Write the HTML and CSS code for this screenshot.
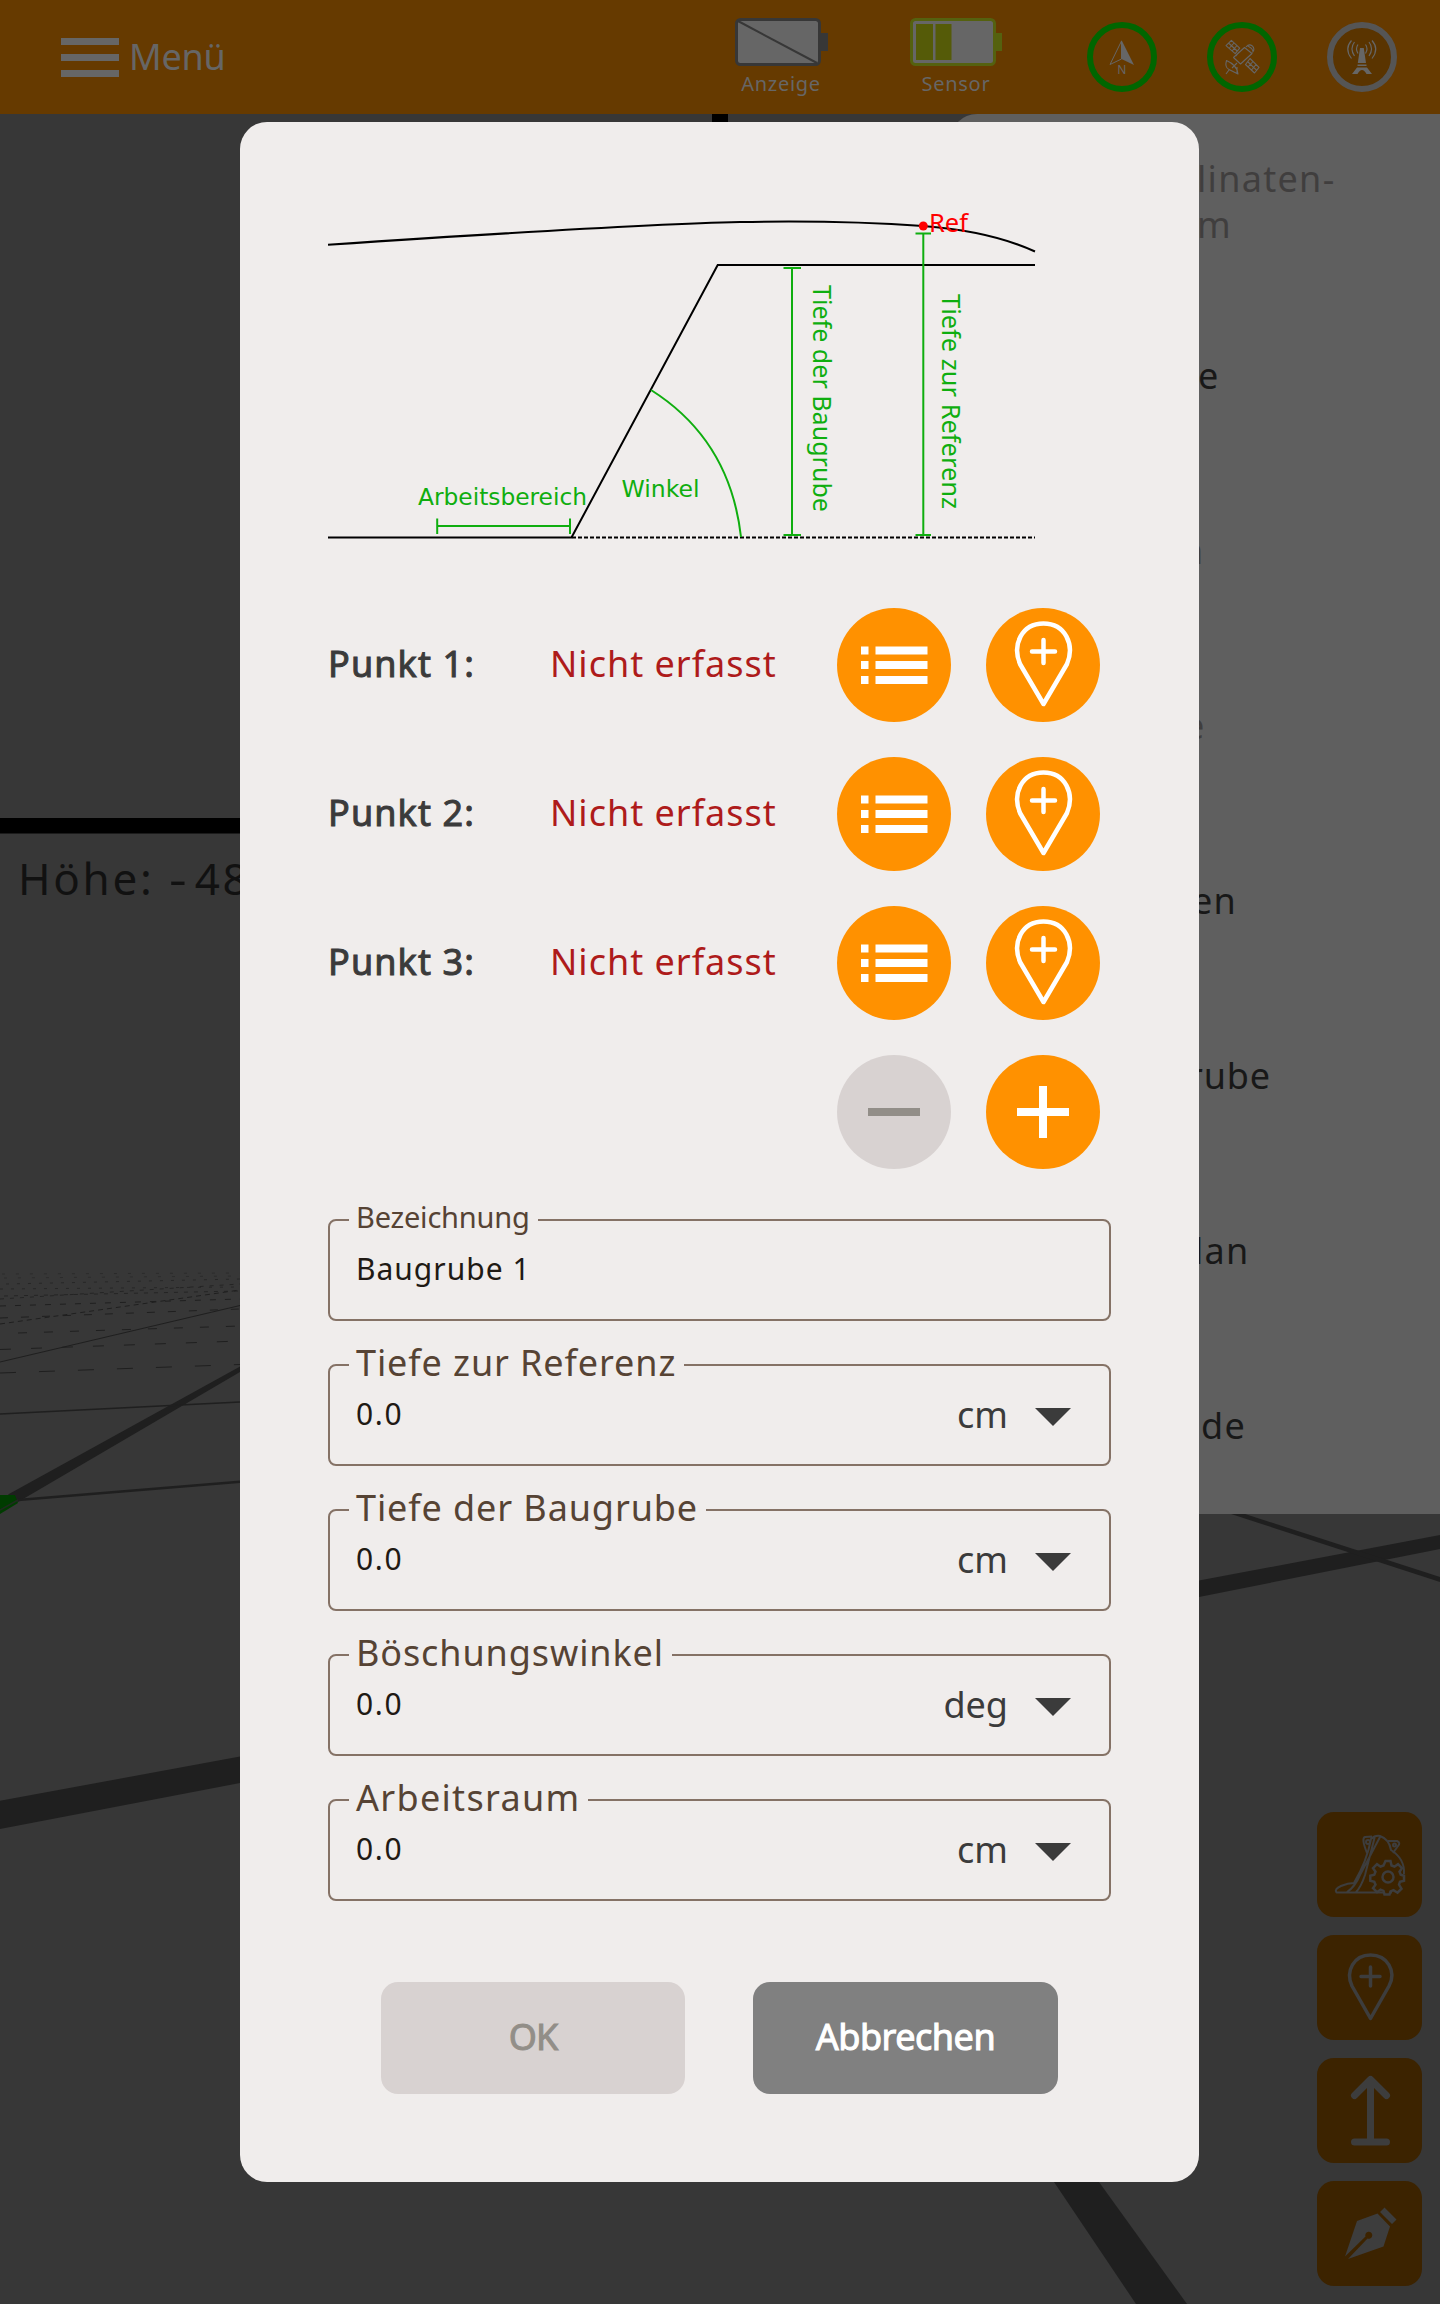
FILE: index.html
```html
<!DOCTYPE html>
<html lang="de">
<head>
<meta charset="utf-8">
<title>Baugrube</title>
<link rel="stylesheet" href="styles.css">
</head>
<body>
<svg class="symbols" width="0" height="0" aria-hidden="true">
  <symbol id="list" viewBox="0 0 114 114">
    <path fill="currentColor" d="M24 38.500h7.500v8h-7.500zM38.500 38.500h52v8h-52zM24 53h7.500v8h-7.500zM38.500 53h52v8h-52zM24 68h7.500v8h-7.500zM38.500 68h52v8h-52z"/>
  </symbol>
  <symbol id="pin" viewBox="0 0 114 114">
    <path fill="none" stroke="currentColor" stroke-width="4.500" stroke-linejoin="round" d="M57.500 96 34 56C26 37 35.500 15.500 57.500 15.500S89 37 81 56Z"/>
    <path stroke="currentColor" stroke-width="4.500" stroke-linecap="round" d="M57.500 32v23M46 43.500h23"/>
  </symbol>
</svg>
<div class="screen">
  <svg class="scene" viewBox="0 0 1440 2304" aria-hidden="true">
    <path fill="#000" d="M0 818h1440v15.500H0zM712 114h16v16h-16z"/>
    <g fill="#1f1f1f">
      <path d="M8 1494.500 240 1366.500v5.500L18 1502z"/>
      <path d="M0 1800.700 240 1756.600V1783L0 1829z"/>
      <path d="M1199 1580.600 1440 1535v14L1199 1597z"/>
      <path d="M1054 2182h45l88 122h-51z"/>
      <path d="M1228 1513h14L1440 1577v5z"/>
    </g>
    <g stroke="#1f1f1f" fill="none">
      <path stroke-width="2.500" d="M18 1500 240 1481.700"/>
      <path stroke-width="1.500" d="M0 1414 240 1402"/>
      <path d="M0 1362 240 1305.500"/>
      <path stroke-dasharray="16 23" d="M0 1373 240 1364.500"/>
      <path stroke-dasharray="11 20" d="M0 1349.500 240 1341"/>
      <path stroke-dasharray="9 17" d="M18 1333 240 1326"/>
      <path stroke-dasharray="5 4" d="M0 1324 240 1290"/>
      <path stroke-dasharray="8 13" d="M0 1318 240 1309"/>
      <path stroke-dasharray="6 9" d="M0 1306 240 1299"/>
      <path stroke-dasharray="4 6" opacity=".8" d="M0 1299 240 1284M4 1296 240 1291"/>
      <path stroke-dasharray="3 8" opacity=".7" d="M0 1289 240 1287M6 1284 240 1279"/>
      <path stroke-dasharray="3 11" opacity=".5" d="M4 1278 240 1276M2 1274 240 1273"/>
    </g>
    <path fill="#003c00" d="M0 1495h15l3 8-18 11z"/>
    <path stroke="#1f2a1f" stroke-width="1.500" d="M0 1510 18 1500"/>
  </svg>

  <header class="topbar">
    <button class="menu" type="button">
      <span class="burger"><i></i><i></i><i></i></span>
      <span>Menü</span>
    </button>
    <div class="battery">
      <svg width="94" height="48" viewBox="0 0 94 48"><path fill="#373737" d="M84 15h9v18h-9z"/><rect x="1.500" y="1.500" width="83" height="45" rx="4" fill="#666" stroke="#373737" stroke-width="3"/><path stroke="#373737" stroke-width="2" d="M3 3 82 45"/></svg>
      <span>Anzeige</span>
    </div>
    <div class="battery sensor">
      <svg width="94" height="48" viewBox="0 0 94 48"><path fill="#55610f" d="M84 15h8v18h-8z"/><rect x="1.500" y="1.500" width="83" height="45" rx="4" fill="#666" stroke="#55610f" stroke-width="3"/><path fill="#555b08" d="M6 6h17v36H6zM25.500 6h16v36h-16z"/></svg>
      <span>Sensor</span>
    </div>
    <div class="states">
      <svg width="70" height="70" viewBox="0 0 70 70"><circle cx="35" cy="35" r="32" fill="none" stroke="#006600" stroke-width="6"/><path fill="none" stroke="#666" stroke-linejoin="round" d="M34.500 19 23 42.500l11.500-5.500z"/><path fill="#666" d="M34.500 18 47 43l-12.500-6z"/><text class="north" x="34.700" y="52" text-anchor="middle">N</text></svg>
      <svg width="70" height="70" viewBox="0 0 70 70"><circle cx="35" cy="35" r="32" fill="none" stroke="#006600" stroke-width="6"/><g fill="none" stroke="#666" stroke-width="1.100" stroke-linejoin="round"><path d="m24.400 18.400 8.300 7.800-4.500 5.500-9.200-8zM21.500 21l8.700 8M27 21l-5 5.500M30 23.500 25 29M37.500 25.500l7.500 6-11.500 10.500-7-6.500zM39 25q3-3.500 6-1.300 3.500 3.300.5 6.800M41 24q4 2 5 5M43 36.500l9 8.900-4.500 5.600-9-8.500zM40.500 39.500l9 8.700M46 39.500l-5 5.500M49 42.500 44.500 48M32 30l-3 4M19.500 38.500q-2 7 2.500 9l9 4.500q-1-9-11.500-13.500zM25 46l5-5M19 52l3-4M30 45v6"/></g></svg>
      <svg width="70" height="70" viewBox="0 0 70 70"><circle cx="35" cy="35" r="32" fill="#5a3400" stroke="#555" stroke-width="6"/><g fill="none" stroke="#666" stroke-width="1.200"><path d="M31 22.500q-3 4 0 9M27.500 20q-5 6.500 0 14M24.500 18.500q-7.500 8.500 0 18M38.500 22.500q3 4 0 9M42 20q5 6.500 0 14M45 18.500q7.500 8.500 0 18"/></g><path fill="#666" d="M33 26h3.800l2.200 15h-8.200zM30.500 42.500h9V44h-9zM30 45.500h10l5 6.500h-5.500q-4.500-8-9 0H25z"/></svg>
    </div>
  </header>

  <aside class="panel">
    <ul>
      <li class="off">linaten-<br>m</li>
      <li>e</li>
      <li class="off">n</li>
      <li class="off">e</li>
      <li>en</li>
      <li>rube</li>
      <li>lan</li>
      <li>de</li>
    </ul>
  </aside>

  <p class="height">Höhe: <span>-</span>48</p>

  <nav class="tools">
    <button type="button"><svg width="105" height="105" viewBox="0 0 105 105"><g fill="none" stroke="#3d3d3d" stroke-width="2" stroke-linejoin="round"><path d="M75 80.500H19.500Q17 77 24 74q7-3 13-3 13-22 17-44 4-4 9-3 9 3 11 14 14 9 13 24M30 80q8-5 13-17L63 25M39 80q5-5 9-17L58 24M50 41q-6-15-2-16l7-.5M71 29h9q4 2 1 5l-5 7"/><circle cx="51" cy="30" r="2"/><circle cx="77.500" cy="33" r="1.500"/></g><g fill="#3c2300" stroke="#3d3d3d" stroke-width="2.500"><path d="M68.500 49h5l1 4.500 3 1.200 3.500-2.500 4 4-2.500 3.500 1.200 3 3.300 1v5l-4 1-1 3 2.500 4-4 4-4-2.500-3 1.200-1 3h-5l-1-3.500-3-1.200-3.500 2.500-4-4 2.500-3.500-1.200-3-4-1v-5l4-1 1.200-3-2.500-3.500 4-4 3.500 2.500 3-1.200z"/><circle cx="71" cy="65" r="5.500"/></g></svg></button>
    <button type="button"><svg width="105" height="105" viewBox="0 0 105 105"><path fill="none" stroke="#3d3d3d" stroke-width="3.500" stroke-linejoin="round" stroke-linecap="round" d="M53.500 83.500 35 51C28 36 37 20 53.500 20S80 36 72 51ZM53.500 32v19M44 41.500h19"/></svg></button>
    <button type="button"><svg width="105" height="105" viewBox="0 0 105 105"><path fill="none" stroke="#3d3d3d" stroke-width="7" stroke-linejoin="round" stroke-linecap="round" d="M53.500 84V22M37.500 37.500l16-16 16 16M37.500 84h32"/></svg></button>
    <button type="button"><svg width="105" height="105" viewBox="0 0 105 105"><path fill="#3d3d3d" d="m67.500 26.500 12 12-4.500 4.500-12-12zM60.500 32.500 73 45.500l-6.500 20L31 78l19.500-20.500a3.500 3.500 0 1 0-2-2L28 75.500 40 40z"/></svg></button>
  </nav>

  <main class="dialog">
    <svg class="sketch" width="720" height="340" viewBox="328 210 720 340">
      <g fill="none" stroke="#000" stroke-width="2">
        <path d="M328 244.700Q640 224 740 222T923 226Q990 231 1035 251.500"/>
        <path d="M328 537.500H571.500L717.700 265H1035"/>
        <path stroke-dasharray="4 2" d="M572 537.500H1035"/>
      </g>
      <g fill="none" stroke="#0fae0f" stroke-width="2">
        <path d="M651 390Q730 440 741 537M437 526H570M437.200 518.500V534M570 518.500V534M792 268V535M783.500 268H801M783.500 535H801M923.300 233V535M915.500 233.500H931M915.500 535H931"/>
      </g>
      <circle cx="923.300" cy="226" r="4.500" fill="#f00"/>
      <g class="sketch-text">
        <text x="418" y="504.500" textLength="169" lengthAdjust="spacingAndGlyphs">Arbeitsbereich</text>
        <text x="621.500" y="497" textLength="78" lengthAdjust="spacingAndGlyphs">Winkel</text>
        <text class="upright" transform="translate(813 285) rotate(90)" textLength="227" lengthAdjust="spacingAndGlyphs">Tiefe der Baugrube</text>
        <text class="upright" transform="translate(942 294) rotate(90)" textLength="215" lengthAdjust="spacingAndGlyphs">Tiefe zur Referenz</text>
        <text class="upright ref" x="929" y="231.500" textLength="39" lengthAdjust="spacingAndGlyphs">Ref</text>
      </g>
    </svg>

    <div class="points">
      <div class="point"><b>Punkt 1:</b><span>Nicht erfasst</span><button type="button"><svg><use href="#list"/></svg></button><button type="button"><svg><use href="#pin"/></svg></button></div>
      <div class="point"><b>Punkt 2:</b><span>Nicht erfasst</span><button type="button"><svg><use href="#list"/></svg></button><button type="button"><svg><use href="#pin"/></svg></button></div>
      <div class="point"><b>Punkt 3:</b><span>Nicht erfasst</span><button type="button"><svg><use href="#list"/></svg></button><button type="button"><svg><use href="#pin"/></svg></button></div>
      <div class="point"><button class="disabled" type="button"><svg viewBox="0 0 114 114"><path fill="currentColor" d="M31 53h52v8H31z"/></svg></button><button type="button"><svg viewBox="0 0 114 114"><path fill="currentColor" d="M31 53h22V31h8v22h22v8H61v22h-8V61H31z"/></svg></button></div>
    </div>

    <div class="fields">
      <div class="field small"><label>Bezeichnung</label><span class="value">Baugrube 1</span></div>
      <div class="field"><label>Tiefe zur Referenz</label><span class="value">0.0</span><span class="unit">cm</span><i class="caret"></i></div>
      <div class="field"><label>Tiefe der Baugrube</label><span class="value">0.0</span><span class="unit">cm</span><i class="caret"></i></div>
      <div class="field"><label>Böschungswinkel</label><span class="value">0.0</span><span class="unit">deg</span><i class="caret"></i></div>
      <div class="field"><label>Arbeitsraum</label><span class="value">0.0</span><span class="unit">cm</span><i class="caret"></i></div>
    </div>

    <div class="actions">
      <button class="ok" type="button">OK</button>
      <button class="cancel" type="button">Abbrechen</button>
    </div>
  </main>
</div>
</body>
</html>
```
FILE: styles.css
```css
* { box-sizing: border-box; }
body { margin: 0; background: #373737; font-family: "Noto Sans", "Open Sans", sans-serif; font-size: 36px; }
button { margin: 0; padding: 0; border: 0; font: inherit; color: inherit; background: none; }
svg { display: block; }
.symbols { position: absolute; }
.screen { position: relative; width: 1440px; height: 2304px; overflow: hidden; }
.scene { position: absolute; inset: 0; width: 1440px; height: 2304px; }

/* top bar */
.topbar { position: relative; display: flex; align-items: flex-start; height: 114px; background: #663a00; color: #666; }
.menu { display: flex; align-items: center; gap: 10px; width: 674px; height: 114px; padding-left: 61px; line-height: 48px; }
.menu span:last-child { margin-top: -1px; letter-spacing: -.2px; }
.burger { display: flex; flex-direction: column; gap: 9px; width: 58px; }
.burger i { height: 7px; background: #666; }
.battery { display: flex; flex-direction: column; width: 94px; margin: 18px 0 0 61px; font-size: 20px; line-height: 28px; letter-spacing: .7px; }
.battery span { width: 92px; margin-top: 4px; text-align: center; }
.battery.sensor { margin-left: 81px; }
.states { display: flex; gap: 50px; margin: 22px 0 0 83px; }
.north { font-size: 12px; fill: #666; }

/* side menu behind the dialog */
.panel { position: absolute; left: 950px; top: 114px; width: 490px; height: 1400px; border-radius: 27px 0 0 0; background: #5f5f5f; color: #181818; }
.panel ul { margin: 0; padding: 3px 0 0 246px; list-style: none; line-height: 46px; letter-spacing: 1.3px; }
.panel li { display: flex; flex-direction: column; justify-content: center; height: 175.100px; padding-left: 3px; white-space: pre; }
.panel li:first-child { display: block; height: 171px; padding: 39px 0 0 1px; line-height: 45.500px; }
.panel li:nth-child(2) { padding-left: 2px; }
.panel li:nth-child(3) { padding: 0; margin-left: -15px; }
.panel li:nth-child(4) { padding: 0; margin-left: -12px; }
.panel li:nth-child(5) { padding: 0; margin-left: -4px; }
.panel li:nth-child(6) { padding: 0; margin-left: -8px; letter-spacing: .8px; }
.panel li:nth-child(7) { padding: 0; margin-left: -2px; }
.panel li:nth-child(8) { padding-left: 5px; }
.panel .off { color: #403e3e; }

.height { position: absolute; left: 18px; top: 848px; margin: 0; font-size: 44px; line-height: 60px; letter-spacing: 2.700px; color: #111; white-space: nowrap; }
.height span { display: inline-block; width: 26px; letter-spacing: 0; transform: scaleX(1.250); transform-origin: 0 50%; }

.tools { position: absolute; left: 1317px; top: 1812px; display: flex; flex-direction: column; gap: 18px; }
.tools button { width: 105px; height: 105px; border-radius: 17px; background: #3c2300; }

/* dialog */
.dialog { position: absolute; left: 240px; top: 122px; width: 959px; height: 2060px; padding: 88px 88px 0; border-radius: 27px; background: #f0edec; color: #3b3b3b; }
.sketch-text { font-family: "DejaVu Sans", sans-serif; font-size: 23px; fill: #0fae0f; }
.sketch-text .upright { font-family: "Noto Sans", sans-serif; font-size: 24.500px; }
.sketch-text .ref { fill: #f00; }

.points { display: flex; flex-direction: column; gap: 35px; width: 772px; margin-top: 58px; }
.point { display: flex; align-items: center; justify-content: flex-end; gap: 35px; height: 114px; letter-spacing: 1px; }
.point b { width: 187px; font-weight: 400; -webkit-text-stroke: 1px; letter-spacing: 1.100px; margin-top: -3px; }
.point span { width: 252px; margin-top: -3px; color: #ae1b1b; white-space: nowrap; }
.point button { width: 114px; height: 114px; border-radius: 50%; background: #ff9100; color: #fff; }
.point button svg { width: 114px; height: 114px; }
.point .disabled { background: #d8d2d1; color: #928e88; }

.fields { display: flex; flex-direction: column; gap: 43px; margin-top: 50px; }
.field { position: relative; display: flex; align-items: flex-start; height: 102px; padding: 30px 38px 0 26px; border: 2px solid #857266; border-radius: 8px; line-height: 36px; letter-spacing: .9px; }
.field label { position: absolute; left: 19px; top: -21px; padding: 0 8px 0 7px; background: #f0edec; color: #564334; line-height: 36px; white-space: nowrap; }
.field:last-child label { letter-spacing: 1.300px; }
.field.small label { top: -22px; font-size: 29px; letter-spacing: -.2px; }
.value { flex: 1; font-size: 30px; letter-spacing: 1.700px; color: #1f1a14; }
.small .value { letter-spacing: 1px; }
.unit { margin-top: 1px; letter-spacing: 0; }
.caret { width: 36px; height: 18px; margin: 12px 0 0 27px; background: #3b3b3b; clip-path: polygon(0 0, 100% 0, 50% 100%); }

.actions { display: flex; gap: 68px; margin: 81px 0 0 53px; }
.actions button { width: 304px; height: 112px; padding-bottom: 3px; border-radius: 17px; -webkit-text-stroke: 1px; }
.ok { background: #d8d2d1; color: #928e88; letter-spacing: -1px; }
.actions .cancel { width: 305px; background: #808080; color: #fff; letter-spacing: -.5px; }
```
